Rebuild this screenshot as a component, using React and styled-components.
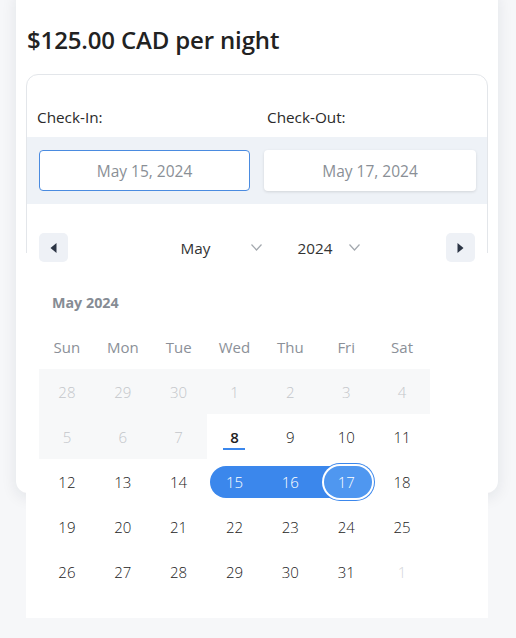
import React from "react";
import styled, { createGlobalStyle } from "styled-components";

const Global = createGlobalStyle`
  html, body { margin: 0; padding: 0; background: #f6f7f9; }
  body { font-family: "Open Sans", "Noto Sans", sans-serif; color: #222; }
  * { box-sizing: border-box; }
`;

const Page = styled.div`
  width: 516px;
  height: 638px;
  overflow: hidden;
  padding-left: 16px;
`;

const Card = styled.div`
  width: 482px;
  height: 505px;
  margin-top: -12px;
  padding: 37px 10px 10px;
  background: #fff;
  border-radius: 12px;
  box-shadow: 0 4px 16px rgba(20, 30, 50, 0.09);
`;

const Title = styled.h1`
  margin: 0 0 0 1px;
  font-size: 24px;
  line-height: 30px;
  font-weight: 600;
  color: #222;
  letter-spacing: -0.15px;
`;

const Box = styled.div`
  position: relative;
  margin-top: 19px;
  border: 1px solid #e3e6ea;
  border-radius: 12px;
  padding-top: 32px;
  height: 420px;
`;

const Labels = styled.div`
  display: grid;
  grid-template-columns: 230px 1fr;
  padding: 0 10px;
  font-size: 15.3px;
  line-height: 20px;
  color: #2a2a2a;
`;

const Band = styled.div`
  margin-top: 10px;
  background: #eef2f7;
  padding: 13px 11px 13px 12px;
  display: grid;
  grid-template-columns: 211px 212px;
  gap: 14px;
`;

const DateInput = styled.div`
  height: 41px;
  border-radius: 4px;
  background: #fff;
  border: 1px solid ${(p) => (p.$focused ? "#4a8be0" : "transparent")};
  box-shadow: ${(p) => (p.$focused ? "none" : "0 1px 3px rgba(0,0,0,0.12)")};
  display: flex;
  align-items: center;
  justify-content: center;
  font-size: 15.5px;
  color: #8a8f96;
`;

const Nav = styled.div`
  position: relative;
  z-index: 2;
  margin-top: 29px;
  padding: 0 12px;
  height: 29px;
  display: flex;
  align-items: center;
  justify-content: space-between;
`;

const NavButton = styled.div`
  width: 29px;
  height: 29px;
  border-radius: 5px;
  background: #eef1f6;
  display: flex;
  align-items: center;
  justify-content: center;
`;

const Selects = styled.div`
  display: flex;
  align-items: center;
  padding-left: 35px;
  gap: 27px;
`;

const Select = styled.div`
  width: ${(p) => p.$w}px;
  display: flex;
  align-items: center;
  justify-content: space-between;
  padding-right: 9px;
  font-size: 15.3px;
  color: #333;
`;

const Popup = styled.div`
  position: absolute;
  z-index: 1;
  left: -1px;
  right: -1px;
  top: 178px;
  height: 365px;
  background: #fff;
  padding: 40px 13px 0;
`;

const Caption = styled.div`
  padding-left: 13px;
  font-size: 14.3px;
  line-height: 20px;
  font-weight: 700;
  color: #868c94;
`;

const Grid = styled.div`
  margin-top: 12px;
  width: 391px;
  display: grid;
  grid-template-columns: repeat(7, 1fr);
`;

const WeekDay = styled.div`
  height: 44px;
  display: flex;
  align-items: center;
  justify-content: center;
  font-size: 15px;
  color: #8b9098;
`;

const Cell = styled.div`
  position: relative;
  height: 45px;
  display: flex;
  align-items: center;
  justify-content: center;
  font-size: 15px;
  font-weight: ${(p) => (p.$today ? 600 : 300)};
  color: ${(p) => (p.$muted ? "#c3c6ca" : "#222")};
  background: ${(p) => (p.$muted ? "#f7f8f9" : "transparent")};
`;

const Pill = styled.div`
  position: absolute;
  top: 7px;
  bottom: 6px;
  left: ${(p) => (p.$kind === "start" ? "3px" : "0")};
  right: ${(p) => (p.$kind === "end" ? "2px" : "0")};
  background: #3b87ec;
  border-radius: ${(p) =>
    p.$kind === "start" ? "16px 0 0 16px" : p.$kind === "end" ? "0 16px 16px 0" : "0"};
`;

const Disc = styled.div`
  position: absolute;
  top: 0;
  bottom: 0;
  right: 0;
  width: 48px;
  border-radius: 16px;
  background: #4f97f0;
  box-shadow: 0 0 0 2px #fff, 0 0 0 3px #3b87ec;
`;

const Num = styled.span`
  position: relative;
  z-index: 1;
  color: ${(p) => (p.$inRange ? "#fff" : "inherit")};
`;

const TodayMark = styled.span`
  position: absolute;
  left: 50%;
  bottom: 9px;
  width: 22px;
  margin-left: -11px;
  height: 2px;
  background: #3b87ec;
`;

const Chevron = () => (
  <svg width="11" height="7" viewBox="0 0 11 7">
    <polyline points="0.5,0.5 5.5,6 10.5,0.5" fill="none" stroke="#a3a8ae" strokeWidth="1.2" />
  </svg>
);

const Tri = ({ dir }) => (
  <svg width="7" height="10" viewBox="0 0 7 10">
    {dir === "left" ? (
      <polygon points="6.5,0 6.5,10 0.5,5" fill="#2b3444" />
    ) : (
      <polygon points="0.5,0 0.5,10 6.5,5" fill="#2b3444" />
    )}
  </svg>
);

const weekDays = ["Sun", "Mon", "Tue", "Wed", "Thu", "Fri", "Sat"];

const days = [
  [28, true], [29, true], [30, true], [1, true], [2, true], [3, true], [4, true],
  [5, true], [6, true], [7, true], [8, false], [9, false], [10, false], [11, false],
  ...Array.from({ length: 20 }, (_, i) => [12 + i, false]),
];

export default function App() {
  const cells = days.map(([d, muted], i) => ({ d, muted, key: i }));
  cells.push({ d: 1, muted: "next", key: 99 });

  return (
    <Page>
      <Global />
      <Card>
        <Title>$125.00 CAD per night</Title>
        <Box>
          <Labels>
            <span>Check-In:</span>
            <span>Check-Out:</span>
          </Labels>
          <Band>
            <DateInput $focused>May 15, 2024</DateInput>
            <DateInput>May 17, 2024</DateInput>
          </Band>
          <Nav>
            <NavButton><Tri dir="left" /></NavButton>
            <Selects>
              <Select $w={90}>May<Chevron /></Select>
              <Select $w={71}>2024<Chevron /></Select>
            </Selects>
            <NavButton><Tri dir="right" /></NavButton>
          </Nav>
          <Popup>
            <Caption>May 2024</Caption>
            <Grid>
              {weekDays.map((w) => (
                <WeekDay key={w}>{w}</WeekDay>
              ))}
              {cells.map(({ d, muted, key }) => {
                const inRange = !muted && d >= 15 && d <= 17;
                const kind = d === 15 ? "start" : d === 17 ? "end" : "mid";
                const nextMonth = muted === "next";
                return (
                  <Cell
                    key={key}
                    $muted={muted === true}
                    $today={!muted && d === 8}
                    style={nextMonth ? { color: "#d4d6d9" } : undefined}
                  >
                    {inRange && (
                      <Pill $kind={kind}>{kind === "end" && <Disc />}</Pill>
                    )}
                    <Num $inRange={inRange}>{d}</Num>
                    {!muted && d === 8 && <TodayMark />}
                  </Cell>
                );
              })}
            </Grid>
          </Popup>
        </Box>
      </Card>
    </Page>
  );
}
